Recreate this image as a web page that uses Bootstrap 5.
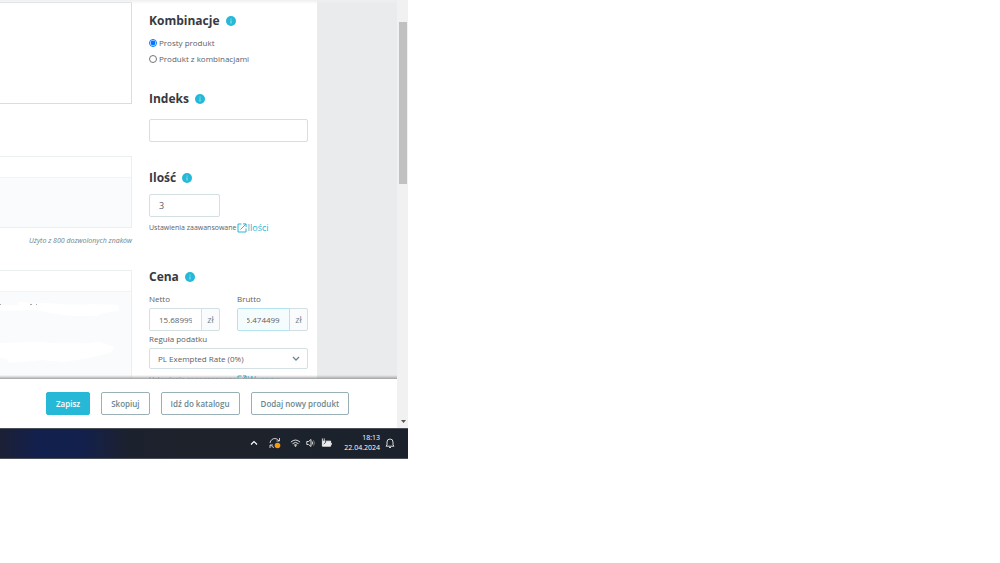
<!DOCTYPE html>
<html lang="pl">
<head>
<meta charset="utf-8">
<meta name="viewport" content="width=device-width, initial-scale=1">
<title>Produkt</title>
<link href="https://cdn.jsdelivr.net/npm/bootstrap@5.3.0/dist/css/bootstrap.min.css" rel="stylesheet">
<style>
:root{--accent:#25b9d7;--line:#d3e0e4}
body{font-family:"Open Sans",sans-serif;font-size:8px;line-height:12px;color:#5c6166;background:#fff}
.screen{max-width:408px}
.viewport{height:379px;background:#fff}
.viewport::before,.viewport::after{content:"";position:absolute;left:0;right:0;z-index:2}
.viewport::before{top:0;height:4px;background:linear-gradient(#efefef,#fff0)}
.viewport::after{bottom:0;height:4px;background:linear-gradient(#8880,#8885 50%,#a0a0a4)}
.editors{flex:1 1 0;max-width:132px}
.box{border:1px solid #eceff0;border-left:0;background:#fafbfc}
.box-head{height:21px;background:#fff;border-bottom:1px solid #f1f3f4}
.editor-top{height:102px;margin-top:2px;border:1px solid var(--line);border-left:0;border-radius:0;resize:none;padding:0;display:block;width:100%}
.box-mid{height:72px;margin-top:52px}
.box-low{height:130px;margin-top:23px}
.counter{font-size:7px;line-height:12px;margin-top:7px;color:#6c868e}
.settings{flex:0 0 185px;padding:13px 9px 0 17px}
.gutter{flex:0 0 80px;background:#e9ebec}
.title{font-size:12px;line-height:16px;font-weight:700;color:#363a41;margin:0;gap:6px}
.info{width:10px;height:10px;padding:0;border:0;background:none;display:flex}
.field,.field:focus{font-size:9px;line-height:12px;height:23px;padding:0 9px;border:1px solid var(--line);border-radius:2px;color:#5c6166;box-shadow:none}
.with-unit{width:71px}
.with-unit .field{font-size:8px}
.with-unit .unit{font-size:9px;line-height:12px;width:19px;padding:0;border:1px solid var(--line);border-radius:2px;background:#fafbfc;color:#6c868e;justify-content:center}
.active-field,.active-field:focus{background:#f4fcfd;border-color:#b3e3ef}
.chooser,.chooser:focus{font-size:8px;height:21px;padding:0 20px 0 8px;background-image:none}
.chevron{position:absolute;right:8px;top:7px;pointer-events:none}
.choices{margin:6px 0 24px}
.choice{gap:2px;height:16px}
.choice input{width:8px;height:8px;margin:0}
.section-ref{margin-bottom:28px}
.section-ref .field{margin-top:12px}
.section-qty{margin-bottom:35px}
.section-qty .field{margin-top:8px}
.prices{margin:8px 0 2px}
.prices .input-group{margin-top:3px}
.tax{margin-top:3px}
.hint{font-size:7px;line-height:12px;margin-top:5px;gap:1px;white-space:nowrap}
.hint a{font-size:9px;color:var(--accent);text-decoration:none}
.actions{height:49px;gap:11px;padding:0 44px 0 46px}
.action{font-size:8px;line-height:12px;font-weight:600;height:23px;padding:0 9px;border:1px solid #9ab0b7;border-radius:2px;background:#fff;color:#6c868e;white-space:nowrap}
.action-main{background:var(--accent);border-color:var(--accent);color:#fff}
.scroller{flex:0 0 11px;background:#f1f1f1;padding:22px 1px 4px 2px}
.thumb{height:162px;background:#c1c1c1}
.taskbar{height:31px;background:linear-gradient(90deg,#1c2036 0,#12204f 10%,#13204d 20%,#1c212f 31%,#1e222b 45%,#1b222c);border-top:1px solid #4b5058;border-bottom:1px solid #4b5058;color:#fff;padding:0 13px 1px 0}
.tray{gap:5px;margin-left:8px}
.clock{font-size:7px;line-height:10px;text-align:right;margin:0 5px 0 12px}
</style>
</head>
<body>
<svg class="d-none">
<symbol id="i-info" viewBox="0 0 10 10"><circle cx="5" cy="5" r="5" fill="#25b9d7"/><path d="M5 4.500v3M5 2.600v1" stroke="#a5e4f1"/></symbol>
<symbol id="i-open" viewBox="0 0 10 10"><path d="M4.500 1H1v8h8V5.500M6 .9h3.100V4M9 1 3.500 6.500" fill="none" stroke="currentColor"/></symbol>
</svg>
<main class="screen">
<div class="d-flex">
<div class="flex-grow-1 overflow-hidden">
<div class="viewport d-flex position-relative overflow-hidden">
<section class="editors">
<textarea class="editor-top" aria-label="Opis"></textarea>
<div class="box box-mid"><div class="box-head"></div></div>
<div class="counter text-end fst-italic text-nowrap">Użyto z 800 dozwolonych znaków</div>
<div class="box box-low"><div class="box-head"></div>
<svg class="d-block" width="131" height="90" viewBox="0 0 131 90"><path d="M0 13H18V10H28V12L46 11Q72 14 92 12L118 13L119 19Q101 20 98 24Q72 25 58 22Q42 20 37 18L0 19ZM0 51L40 50Q72 53 100 50L114 55L112 60L101 63L84 67L63 70L42 68L9 71L7 67L0 66Z" fill="#fff"/><path d="M0 12.500h1M30 12.500h2M36 12.500h1" stroke="#aaa"/></svg></div>
</section>
<form class="settings">
<h2 class="title d-flex align-items-center">Kombinacje <button type="button" class="info" aria-label="Pomoc"><svg width="10" height="10"><use href="#i-info"/></svg></button></h2>
<div class="choices">
<div class="choice d-flex align-items-center"><input type="radio" name="kind" id="simple" checked><label for="simple">Prosty produkt</label></div>
<div class="choice d-flex align-items-center"><input type="radio" name="kind" id="combo"><label for="combo">Produkt z kombinacjami</label></div>
</div>
<div class="section-ref">
<h2 class="title d-flex align-items-center"><label for="ref">Indeks</label> <button type="button" class="info" aria-label="Pomoc"><svg width="10" height="10"><use href="#i-info"/></svg></button></h2>
<input id="ref" class="form-control field">
</div>
<div class="section-qty">
<h2 class="title d-flex align-items-center"><label for="qty">Ilość</label> <button type="button" class="info" aria-label="Pomoc"><svg width="10" height="10"><use href="#i-info"/></svg></button></h2>
<input id="qty" class="form-control field with-unit" value="3">
<div class="hint d-flex align-items-center">Ustawienia zaawansowane<a href="#" class="d-flex align-items-center"><svg width="10" height="10"><use href="#i-open"/></svg>Ilości</a></div>
</div>
<h2 class="title d-flex align-items-center">Cena <button type="button" class="info" aria-label="Pomoc"><svg width="10" height="10"><use href="#i-info"/></svg></button></h2>
<div class="prices d-flex justify-content-between">
<div><label class="d-block" for="net">Netto</label><div class="input-group flex-nowrap with-unit"><input id="net" class="form-control field" value="15.689999"><span class="input-group-text unit">zł</span></div></div>
<div><label class="d-block" for="gross">Brutto</label><div class="input-group flex-nowrap with-unit"><input id="gross" class="form-control field active-field" value="15.474499"><span class="input-group-text unit">zł</span></div></div>
</div>
<label class="d-block" for="tax">Reguła podatku</label>
<div class="tax position-relative"><select id="tax" class="form-select field chooser"><option>PL Exempted Rate (0%)</option></select><svg class="chevron" width="8" height="8" viewBox="0 0 8 8" fill="none" stroke="#6c868e" stroke-width="1.300"><path d="m1 2 3 3 3-3"/></svg></div>
<div class="hint d-flex align-items-center">Ustawienia zaawansowane<a href="#" class="d-flex align-items-center"><svg width="10" height="10"><use href="#i-open"/></svg>Wycena</a></div>
</form>
<div class="gutter"></div>
</div>
<footer class="actions d-flex align-items-center">
<button class="action action-main">Zapisz</button><button class="action">Skopiuj</button><button class="action">Idź do katalogu</button><button class="action">Dodaj nowy produkt</button>
</footer>
</div>
<div class="scroller d-flex flex-column justify-content-between"><div class="thumb"></div><svg class="align-self-center" width="5" height="5" viewBox="0 0 5 5"><path d="M0 1h5L2.500 4Z" fill="#555"/></svg></div>
</div>
<div class="taskbar d-flex align-items-center justify-content-end">
<svg width="8" height="8" viewBox="0 0 8 8" fill="none" stroke="#fff" stroke-width="1.200"><path d="m1 5.500 3-3 3 3"/></svg>
<svg class="ms-2" width="16" height="12" viewBox="-3 0 16 12" fill="none" stroke="#ddd" stroke-width=".9"><path d="M1 6Q2 1.500 6 1.500q2.500 0 4 2.500M10.500 1v3h-3M5 10.500Q3 10 1.500 8M1 11V8h3"/><circle cx="8.500" cy="8.500" r="2.800" fill="#f7980d" stroke="none"/></svg>
<div class="tray d-flex align-items-center">
<svg width="11" height="12" viewBox="0 0 12 12" fill="none" stroke="#eee"><path d="M1 5q5-4.500 10 0M2.700 6.800q3.300-3 6.600 0M4.300 8.500q1.700-1.500 3.400 0"/><circle cx="6" cy="9.300" r=".8" fill="#fff" stroke="none"/></svg>
<svg width="10" height="10" viewBox="0 0 10 10" fill="none" stroke="#eee" stroke-width=".9"><path d="M.8 3.500h1.700L5 1.500v7L2.500 6.500H.8ZM6.300 3.500q1 1.500 0 3"/><path d="M7.500 2.200q2 2.800 0 5.600" stroke="#777"/></svg>
<svg width="11" height="10" viewBox="0 0 12 10"><path d="M1.500 3h9v5.500h-9Z" fill="#eee" stroke="#eee"/><path d="M11.500 5v2M1.500 0v3M3.500 0v3" stroke="#eee" stroke-width=".9"/><path d="M5 2.500v2L3 6" stroke="#1b222c" stroke-width=".8" fill="none"/></svg>
</div>
<div class="clock">18:13<br>22.04.2024</div>
<svg width="10" height="12" viewBox="0 0 10 12" fill="none" stroke="#eee" stroke-width=".9"><path d="M2 8V5a3 3 0 0 1 6 0v3l1 1.200H1ZM4 10.500h2"/></svg>
</div>
</main>
<script src="https://cdn.jsdelivr.net/npm/bootstrap@5.3.0/dist/js/bootstrap.bundle.min.js"></script>
<script>
const gross = document.getElementById('gross');
gross.scrollLeft = gross.scrollWidth;
</script>
</body>
</html>
